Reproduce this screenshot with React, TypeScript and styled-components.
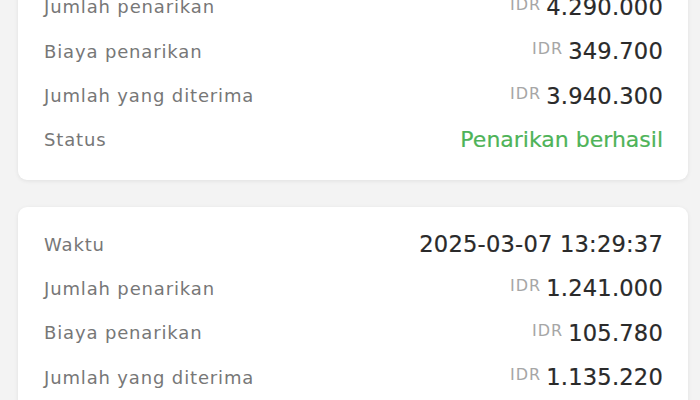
import React from "react";
import styled, { createGlobalStyle } from "styled-components";

const GlobalStyle = createGlobalStyle`
  html, body {
    margin: 0;
    padding: 0;
    background: #f3f3f3;
    overflow: hidden;
  }
  body {
    font-family: "DejaVu Sans", "Noto Sans", sans-serif;
    -webkit-font-smoothing: antialiased;
  }
`;

const Page = styled.main`
  display: flex;
  flex-direction: column;
  gap: 27px;
  width: 670px;
  padding: 0 12px 0 18px;
  margin-top: -74.5px;
`;

const Card = styled.section`
  background: #ffffff;
  border-radius: 9px;
  box-shadow: 0 1px 4px rgba(0, 0, 0, 0.08);
  padding: 15px 25px 18px 26px;
  display: flex;
  flex-direction: column;
`;

const Row = styled.div`
  display: flex;
  align-items: center;
  justify-content: space-between;
  height: 44.3px;
`;

const Label = styled.span`
  font-size: 18px;
  letter-spacing: 0.85px;
  color: #777777;
`;

const Value = styled.span<{ $tone?: "default" | "success" }>`
  display: flex;
  align-items: flex-start;
  font-size: ${(p) => (p.$tone === "success" ? "22px" : "22.6px")};
  letter-spacing: ${(p) => (p.$tone === "success" ? "0" : "0.2px")};
  -webkit-text-stroke: 0.2px currentColor;
  color: ${(p) => (p.$tone === "success" ? "#4eb358" : "#2a2a2a")};
`;

const Currency = styled.span`
  font-size: 16px;
  letter-spacing: 1px;
  color: #a6a6a6;
  -webkit-text-stroke: 0;
  margin-right: 5px;
  margin-top: 1px;
`;

type Entry = {
  label: string;
  value: string;
  currency?: boolean;
  tone?: "default" | "success";
};

const withdrawals: Entry[][] = [
  [
    { label: "Waktu", value: "2025-03-08 09:14:52" },
    { label: "Jumlah penarikan", value: "4.290.000", currency: true },
    { label: "Biaya penarikan", value: "349.700", currency: true },
    { label: "Jumlah yang diterima", value: "3.940.300", currency: true },
    { label: "Status", value: "Penarikan berhasil", tone: "success" },
  ],
  [
    { label: "Waktu", value: "2025-03-07 13:29:37" },
    { label: "Jumlah penarikan", value: "1.241.000", currency: true },
    { label: "Biaya penarikan", value: "105.780", currency: true },
    { label: "Jumlah yang diterima", value: "1.135.220", currency: true },
    { label: "Status", value: "Penarikan berhasil", tone: "success" },
  ],
];

export default function App() {
  return (
    <>
      <GlobalStyle />
      <Page>
        {withdrawals.map((rows, i) => (
          <Card key={i}>
            {rows.map((r) => (
              <Row key={r.label}>
                <Label>{r.label}</Label>
                <Value $tone={r.tone}>
                  {r.currency && <Currency>IDR</Currency>}
                  {r.value}
                </Value>
              </Row>
            ))}
          </Card>
        ))}
      </Page>
    </>
  );
}
